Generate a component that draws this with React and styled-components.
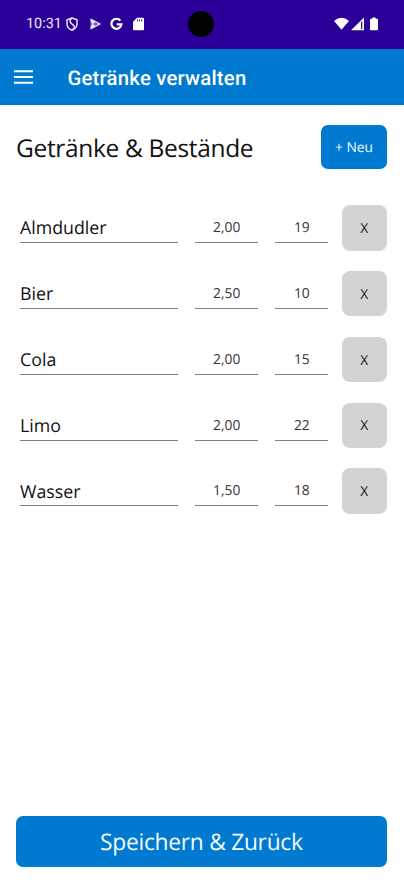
import React, { useState } from "react";
import styled, { createGlobalStyle } from "styled-components";

const GlobalStyle = createGlobalStyle`
  * { box-sizing: border-box; }
  body { margin: 0; background: #fff; }
  button, input { font-family: "Open Sans", sans-serif; border: 0; padding: 0; margin: 0; text-rendering: geometricPrecision; }
`;

const Screen = styled.div`
  display: flex;
  flex-direction: column;
  width: 404px;
  height: 885px;
  background: #fff;
  color: #111;
  font-family: "Open Sans", sans-serif;
  text-rendering: geometricPrecision;
`;

const StatusBar = styled.header`
  display: grid;
  grid-template-columns: 188px 26px 1fr;
  align-items: center;
  height: 49px;
  padding-bottom: 2px;
  background: #2b0098;
  color: #fff;
`;

const StatusLeft = styled.div`
  display: flex;
  align-items: center;
  padding-left: 26px;
`;

const Clock = styled.time`
  width: 40px;
  margin-top: 1px;
  font: 400 14.4px/18px Roboto, sans-serif;
  color: #ece6f8;
`;

const Camera = styled.div`
  width: 26px;
  height: 26px;
  border-radius: 50%;
  background: #000;
`;

const StatusRight = styled.div`
  display: flex;
  align-items: center;
  justify-content: flex-end;
  padding-right: 26px;
`;

const StatusIcon = styled.svg`
  display: block;
  flex: none;
  width: ${(p) => p.$w}px;
  height: ${(p) => p.$h || 14}px;
  margin-left: ${(p) => p.$gap || 0}px;
`;

const AppBar = styled.nav`
  display: flex;
  align-items: center;
  height: 56px;
  padding-left: 14px;
  background: #007ad0;
  color: #fff;
`;

const MenuButton = styled.button`
  display: flex;
  width: 53.5px;
  background: none;
  color: inherit;
`;

const AppTitle = styled.h1`
  margin: 2px 0 0;
  font: 500 20.3px/28px Roboto, sans-serif;
  letter-spacing: 0.22px;
`;

const Content = styled.main`
  display: flex;
  flex: 1;
  flex-direction: column;
  padding: 20.4px 17.3px 18.3px 16px;
`;

const Heading = styled.div`
  display: flex;
  align-items: center;
  justify-content: space-between;
  height: 44px;
  margin-bottom: 35.8px;
`;

const PageTitle = styled.h2`
  margin: 3.4px 0 0;
  font-weight: 400;
  font-size: 24.5px;
  line-height: 34px;
  letter-spacing: -0.33px;
  white-space: nowrap;
`;

const PrimaryButton = styled.button`
  border-radius: 7px;
  background: #007ad0;
  color: #f4f9fd;
`;

const NewButton = styled(PrimaryButton)`
  width: 65.5px;
  height: 44px;
  padding-top: 1px;
  font-size: 13.8px;
`;

const SaveButton = styled(PrimaryButton)`
  height: 50.5px;
  margin-top: auto;
  font-size: 22.8px;
  letter-spacing: -0.28px;
`;

const List = styled.div`
  display: flex;
  flex-direction: column;
  gap: 20.3px;
`;

const Row = styled.div`
  display: grid;
  grid-template-columns: 158px 63px 53px 45.5px;
  column-gap: 17.2px;
  height: 45.5px;
  padding-left: 4px;
`;

const Field = styled.input`
  width: 100%;
  height: 38px;
  padding-top: ${(p) => (p.$numeric ? 8 : 9.6)}px;
  border-bottom: 1px solid #808080;
  border-radius: 0;
  outline: none;
  background: none;
  color: ${(p) => (p.$numeric ? "#333" : "#111")};
  font-size: ${(p) => (p.$numeric ? 13.8 : 17.8)}px;
  text-align: ${(p) => (p.$numeric ? "center" : "left")};
`;

const DeleteButton = styled.button`
  width: 45.5px;
  height: 45.5px;
  margin-left: -4px;
  padding-top: 1px;
  border-radius: 8px;
  background: #d3d3d3;
  color: #222;
  font-size: 13.8px;
`;

const ShieldIcon = () => (
  <StatusIcon $w={12} viewBox="0 0 12 14" fill="none" stroke="#e9e2f7" strokeWidth="1.5">
    <path d="M6 1 11 2.7V7c0 2.9-2.1 5-5 6.2C3.1 12 1 9.9 1 7V2.7Z" />
    <path d="M6 1.2C3.6 2.5 3.5 5 5.2 6.4L7.6 8.3C8.9 9.4 8.2 11.2 6.6 12.6" />
  </StatusIcon>
);

const PlayIcon = () => (
  <StatusIcon $w={12} $gap={11.5} viewBox="0 0 12 14">
    <path d="M.5 1.2 11.2 7 .5 12.8Z" fill="#e9e2f7" />
    <path d="M5.500 5.300 3.300 7 5.500 8.700 7.800 7Z" fill="#2b0098" />
    <path d="M.5 4.700 2 7 .5 9.300" fill="#2b0098" />
    <circle cx="5.600" cy="7" r=".8" fill="#e9e2f7" />
  </StatusIcon>
);

const GoogleIcon = () => (
  <StatusIcon $w={13} $gap={8.5} viewBox="0 0 13 14" fill="none" stroke="#fff" strokeWidth="2.2">
    <path d="M10.4 3.7A5 5 0 1 0 11.4 7.3H6.7" />
  </StatusIcon>
);

const CardIcon = () => (
  <StatusIcon $w={11} $gap={10} viewBox="0 0 11 14">
    <path d="M4 .8h6q1 0 1 1v10.4q0 1-1 1H1q-1 0-1-1V4.8Z" fill="#fff" />
    <path d="M4.5 2.3v2.2M6.6 2.3v2.2M8.7 2.3v2.2" stroke="#2b0098" strokeWidth=".9" />
  </StatusIcon>
);

const WifiIcon = () => (
  <StatusIcon $w={15} viewBox="0 0 15 14">
    <path d="M0 3.9Q7.5-2.3 15 3.9L7.5 12.8Z" fill="#fff" />
  </StatusIcon>
);

const SignalIcon = () => (
  <StatusIcon $w={13} $gap={1.5} viewBox="0 0 13 14">
    <path d="M0 13.2 13 .5V13.2Z" fill="#fff" />
    <path d="M10.7 4.5v7.6" stroke="#2b0098" strokeWidth="1.2" />
  </StatusIcon>
);

const BatteryIcon = () => (
  <StatusIcon $w={8} $gap={6.5} viewBox="0 0 8 14">
    <path d="M2.3.5h3.4v1.3H7q1 0 1 1v9.5q0 1-1 1H1q-1 0-1-1V2.8q0-1 1-1h1.3Z" fill="#fff" />
  </StatusIcon>
);

const MenuIcon = () => (
  <StatusIcon $w={19} $h={14} viewBox="0 0 19 14">
    <path d="M0 1.2h19M0 7h19M0 12.8h19" stroke="#fff" strokeWidth="1.9" />
  </StatusIcon>
);

const initialDrinks = [
  { name: "Almdudler", price: "2,00", stock: "19" },
  { name: "Bier", price: "2,50", stock: "10" },
  { name: "Cola", price: "2,00", stock: "15" },
  { name: "Limo", price: "2,00", stock: "22" },
  { name: "Wasser", price: "1,50", stock: "18" },
];

export default function App() {
  const [drinks, setDrinks] = useState(initialDrinks);

  const update = (index, key) => (event) =>
    setDrinks(drinks.map((d, i) => (i === index ? { ...d, [key]: event.target.value } : d)));
  const remove = (index) => setDrinks(drinks.filter((_, i) => i !== index));
  const add = () => setDrinks([...drinks, { name: "", price: "0,00", stock: "0" }]);

  return (
    <Screen>
      <GlobalStyle />
      <StatusBar>
        <StatusLeft>
          <Clock>10:31</Clock>
          <ShieldIcon />
          <PlayIcon />
          <GoogleIcon />
          <CardIcon />
        </StatusLeft>
        <Camera />
        <StatusRight>
          <WifiIcon />
          <SignalIcon />
          <BatteryIcon />
        </StatusRight>
      </StatusBar>
      <AppBar>
        <MenuButton aria-label="Menü">
          <MenuIcon />
        </MenuButton>
        <AppTitle>Getränke verwalten</AppTitle>
      </AppBar>
      <Content>
        <Heading>
          <PageTitle>Getränke &amp; Bestände</PageTitle>
          <NewButton onClick={add}>+ Neu</NewButton>
        </Heading>
        <List>
          {drinks.map((drink, i) => (
            <Row key={i}>
              <Field value={drink.name} onChange={update(i, "name")} />
              <Field $numeric value={drink.price} onChange={update(i, "price")} />
              <Field $numeric value={drink.stock} onChange={update(i, "stock")} />
              <DeleteButton onClick={() => remove(i)}>X</DeleteButton>
            </Row>
          ))}
        </List>
        <SaveButton>Speichern &amp; Zurück</SaveButton>
      </Content>
    </Screen>
  );
}
